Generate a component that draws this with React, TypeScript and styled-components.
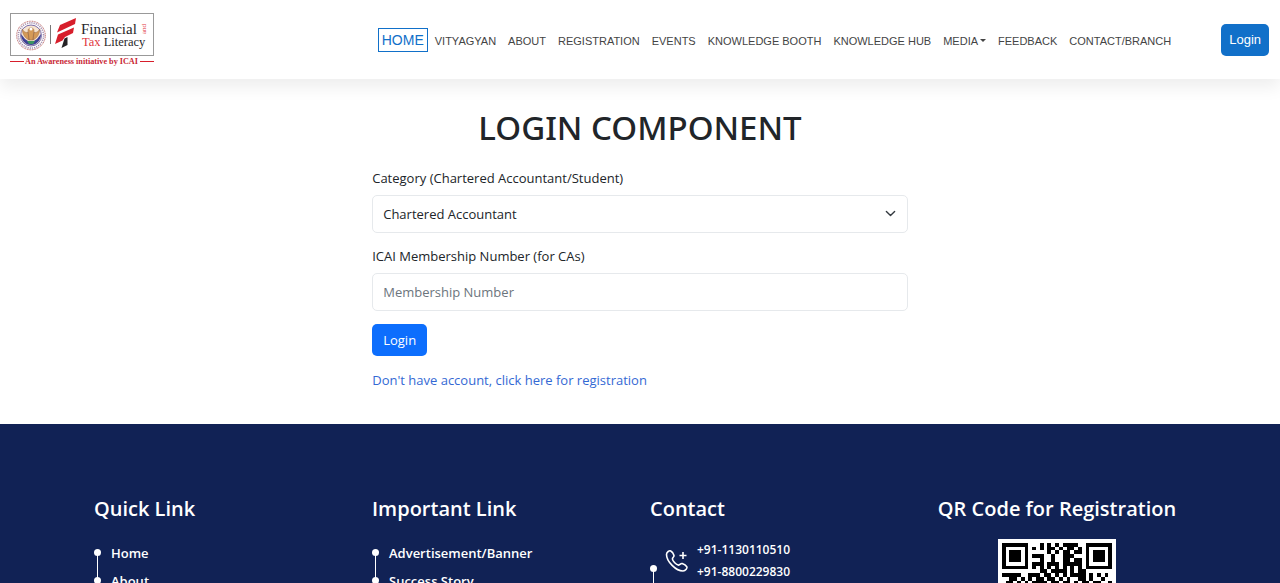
import React from "react";
import styled, { createGlobalStyle } from "styled-components";

const GlobalStyle = createGlobalStyle`
  *, *::before, *::after { box-sizing: border-box; }
  body {
    margin: 0;
    background: #fff;
    color: #212529;
    font-family: "Open Sans", "Noto Sans", sans-serif;
    font-size: 13px;
    line-height: 20px;
    overflow-x: hidden;
  }
`;

const Header = styled.header`
  display: flex;
  align-items: center;
  height: 79px;
  padding: 0 11px 0 10px;
  background: #fff;
  box-shadow: 0 8px 16px rgba(0, 0, 0, 0.07);
`;

const LogoLink = styled.a`
  display: block;
  flex: none;
  height: 54px;
`;

const Nav = styled.nav`
  display: flex;
  align-items: center;
  gap: 12px;
  margin-left: auto;
  font-family: "Liberation Sans", Arial, sans-serif;
`;

const NavLink = styled.a<{ $active?: boolean }>`
  display: flex;
  align-items: center;
  gap: 2px;
  color: ${(p) => (p.$active ? "#1170c9" : "#444")};
  font-size: ${(p) => (p.$active ? 14 : 11)}px;
  line-height: 22px;
  padding: ${(p) => (p.$active ? "0 3px" : "2px 0 0")};
  border: ${(p) => (p.$active ? "1px solid #1170c9" : "0")};
  margin-right: ${(p) => (p.$active ? "-5px" : "0")};
  text-decoration: none;
  white-space: nowrap;
`;

const Caret = styled.span`
  border: 3px solid transparent;
  border-top-color: currentColor;
  border-bottom: 0;
`;

const Button = styled.button<{ $header?: boolean }>`
  height: 32px;
  padding: 0 ${(p) => (p.$header ? 8 : 11)}px;
  margin-left: ${(p) => (p.$header ? 50 : 0)}px;
  border: 0;
  border-radius: 5px;
  background: ${(p) => (p.$header ? "#1170c9" : "#0d6efd")};
  color: #fff;
  font-family: ${(p) => (p.$header ? '"Liberation Sans", Arial, sans-serif' : "inherit")};
  font-size: 13px;
  cursor: pointer;
`;

const Main = styled.main`
  max-width: 42%;
  margin: 0 auto;
  padding: 28px 1px 34px;
`;

const Title = styled.h1`
  margin: 0 0 19px;
  font-family: "Noto Sans", sans-serif;
  font-size: 33px;
  line-height: 42px;
  font-weight: 500;
  text-align: center;
  white-space: nowrap;
`;

const Form = styled.form`
  display: flex;
  flex-direction: column;
  align-items: flex-start;
`;

const Field = styled.div`
  position: relative;
  display: flex;
  flex-direction: column;
  gap: 7px;
  width: 100%;
  margin-bottom: 13px;
`;

const Control = styled.input`
  width: 100%;
  height: 38px;
  padding: 0 10px;
  border: 1px solid #e6e9ec;
  border-radius: 5px;
  background: #fff;
  color: #212529;
  font: inherit;
  &::placeholder { color: #6c757d; opacity: 1; }
`;

const Select = styled(Control).attrs({ as: "select" })`
  appearance: none;
`;

const Chevron = styled.svg`
  position: absolute;
  right: 12px;
  bottom: 14px;
  pointer-events: none;
`;

const RegisterLink = styled.a`
  margin-top: 14px;
  color: #3469d4;
  text-decoration: none;
`;

const Footer = styled.footer`
  display: grid;
  grid-template-columns: repeat(4, 1fr);
  padding: 70px 84px 24px;
  background: #112255;
  color: #fff;
  font-weight: 600;
`;

const Column = styled.section<{ $center?: boolean }>`
  display: flex;
  flex-direction: column;
  align-items: ${(p) => (p.$center ? "center" : "stretch")};
  padding: 0 10px;
`;

const Heading = styled.h2`
  margin: 0 0 15px;
  font-size: 20px;
  line-height: 30px;
  font-weight: 600;
  white-space: nowrap;
`;

const List = styled.ul`
  margin: 0;
  padding: 0;
  list-style: none;
`;

const Item = styled.li<{ $tall?: boolean }>`
  position: relative;
  display: flex;
  align-items: center;
  gap: 8px;
  height: ${(p) => (p.$tall ? 44 : 28)}px;
  padding-left: ${(p) => (p.$tall ? 15 : 17)}px;
  &::before {
    content: "";
    position: absolute;
    left: 0;
    top: ${(p) => (p.$tall ? 26 : 10)}px;
    width: 7px;
    height: 7px;
    border-radius: 50%;
    background: #fff;
  }
  &::after {
    content: "";
    position: absolute;
    left: 3px;
    top: ${(p) => (p.$tall ? 30 : 12)}px;
    width: 1px;
    height: 28px;
    background: #fff;
  }
`;

const FooterLink = styled.a`
  display: block;
  color: #fff;
  text-decoration: none;
`;

const Phones = styled.div`
  font-size: 12px;
  line-height: 22px;
`;

const Logo = () => (
  <svg width="144" height="54" viewBox="0 0 144 54" role="img" aria-label="Financial and Tax Literacy">
    <rect x="0.5" y="0.5" width="143" height="42" fill="#fff" stroke="#999" />
    <circle cx="21" cy="22.500" r="14.300" fill="#fff" stroke="#b65a5a" strokeDasharray="1 0.700" />
    <circle cx="21" cy="22.500" r="12.600" fill="none" stroke="#a58fae" strokeWidth="1.600" strokeDasharray="1.200 1" />
    <circle cx="21" cy="22.500" r="10.500" fill="#f7e4cf" stroke="#5a4d9b" strokeWidth="0.800" />
    <path d="M11 21c0 6 4 11 10 11s10-5 10-11l-4 5-3 2h-6l-3-2z" fill="#3d4197" />
    <path d="M12 16c1 6 3 9 7 11l-1-8c-2 1-4 0-6-3zM30 16c-1 6-3 9-7 11l1-8c2 1 4 0 6-3zM18 17c1-3 5-3 6 0l-1 10h-4z" fill="#d59a57" stroke="#946746" strokeWidth="0.500" />
    <circle cx="21" cy="16" r="1.500" fill="#fff" />
    <path d="M17 28h8l-2 3h-4z" fill="#3c9460" />
    <path d="M40.500 12v19" fill="none" stroke="#777" />
    <path d="M50 12L66 5l-1 6-18 8.500z" fill="#d71e2b" />
    <path d="M48 21.500L64 14.500l-1 5.500-8 4-2.500 3.500L45 31z" fill="#d71e2b" />
    <path d="M54.500 25.500L57.500 24v8L51.500 35z" fill="#252225" />
    <g fontFamily="Liberation Serif, serif">
      <text x="71" y="21" fontSize="15" fill="#29272a">Financial</text>
      <text x="72" y="32.500" fontSize="12.500"><tspan fill="#df3540">Tax</tspan><tspan fill="#29272a"> Literacy</tspan></text>
      <text transform="translate(136 21) rotate(-90)" fontSize="7" fill="#df3540">and</text>
      <text x="15" y="51" fontSize="8.200" fontWeight="700" fill="#c92634">An Awareness initiative by ICAI</text>
    </g>
    <rect x="0" y="48" width="14" height="1" fill="#d71e2b" />
    <rect x="130" y="48" width="14" height="1" fill="#d71e2b" />
  </svg>
);

const QR_ROWS = [
  "11111110001010101111001111111",
  "10000010101011010110101000001",
  "10111010000010101101101011101",
  "10111010111001001110001011101",
  "10111010001001001101101011101",
  "10000010111011101111101000001",
  "11111110101010101010101111111",
  "00000000001101111010110000000",
  "11111001110110101011110101010",
  "00110101011011010100110100100",
  "01101010111101101101011011001",
];

const isDark = (row: number, col: number) => {
  if (QR_ROWS[row]) return QR_ROWS[row][col] === "1";
  if (row >= 21 && col < 8) {
    if (row === 21 || col === 7) return false;
    const ring = Math.max(Math.abs(row - 25), Math.abs(col - 3));
    return ring !== 2;
  }
  return (row * 7 + col * 11 + ((row * col) % 5)) % 4 < 2;
};

const QrCode = () => {
  let d = "";
  for (let r = 0; r < 29; r++)
    for (let c = 0; c < 29; c++) if (isDark(r, c)) d += `M${c} ${r}h1v1h-1z`;
  return (
    <svg width="118" height="118" viewBox="-1 -1 31 31" role="img" aria-label="QR code" shapeRendering="crispEdges">
      <rect x="-1" y="-1" width="31" height="31" fill="#fff" />
      <path d={d} fill="#000" />
    </svg>
  );
};

const PhoneIcon = () => (
  <svg width="24" height="24" viewBox="0 0 24 24" fill="none" stroke="#fff" strokeWidth="1.600" strokeLinejoin="round" aria-hidden="true">
    <path d="M5.800 2c-1.300-.8-4.300.9-4.300 3.500C1.500 12.500 11 22 18 22c2.700 0 4.600-3 3.800-4.200-.9-1.400-3.300-2.800-4.600-3.300-1.600-.5-2 1.700-3.700 1.600-2.300-.2-5.800-3.900-6.100-6.100-.2-1.600 1.900-2 1.600-3.500C8.700 5 7.200 2.800 5.800 2z" />
    <path d="M18 3v7M14.500 6.500h7" />
  </svg>
);

const NAV = ["VITYAGYAN", "ABOUT", "REGISTRATION", "EVENTS", "KNOWLEDGE BOOTH", "KNOWLEDGE HUB", "MEDIA", "FEEDBACK", "CONTACT/BRANCH"];

const LinkColumn = ({ title, links }: { title: string; links: string[] }) => (
  <Column>
    <Heading>{title}</Heading>
    <List>
      {links.map((l) => (
        <Item key={l}><FooterLink href="#">{l}</FooterLink></Item>
      ))}
    </List>
  </Column>
);

export default function App() {
  return (
    <>
      <GlobalStyle />
      <Header>
        <LogoLink href="#"><Logo /></LogoLink>
        <Nav>
          <NavLink href="#" $active>HOME</NavLink>
          {NAV.map((n) => (
            <NavLink key={n} href="#">{n}{n === "MEDIA" && <Caret />}</NavLink>
          ))}
        </Nav>
        <Button type="button" $header>Login</Button>
      </Header>
      <Main>
        <Title>LOGIN COMPONENT</Title>
        <Form onSubmit={(e) => e.preventDefault()}>
          <Field>
            <label htmlFor="category">Category (Chartered Accountant/Student)</label>
            <Select id="category">
              <option>Chartered Accountant</option>
              <option>Student</option>
            </Select>
            <Chevron width="11" height="11" viewBox="0 0 16 16" fill="none" stroke="#343a40" strokeWidth="2" strokeLinecap="round" strokeLinejoin="round">
              <path d="m2 5 6 6 6-6" />
            </Chevron>
          </Field>
          <Field>
            <label htmlFor="membership">ICAI Membership Number (for CAs)</label>
            <Control id="membership" type="text" placeholder="Membership Number" />
          </Field>
          <Button type="submit">Login</Button>
          <RegisterLink href="#">Don't have account, click here for registration</RegisterLink>
        </Form>
      </Main>
      <Footer>
        <LinkColumn title="Quick Link" links={["Home", "About"]} />
        <LinkColumn title="Important Link" links={["Advertisement/Banner", "Success Story"]} />
        <Column>
          <Heading>Contact</Heading>
          <List>
            <Item $tall>
              <PhoneIcon />
              <Phones>
                <FooterLink href="tel:+911130110510">+91-1130110510</FooterLink>
                <FooterLink href="tel:+918800229830">+91-8800229830</FooterLink>
              </Phones>
            </Item>
          </List>
        </Column>
        <Column $center>
          <Heading>QR Code for Registration</Heading>
          <QrCode />
        </Column>
      </Footer>
    </>
  );
}
